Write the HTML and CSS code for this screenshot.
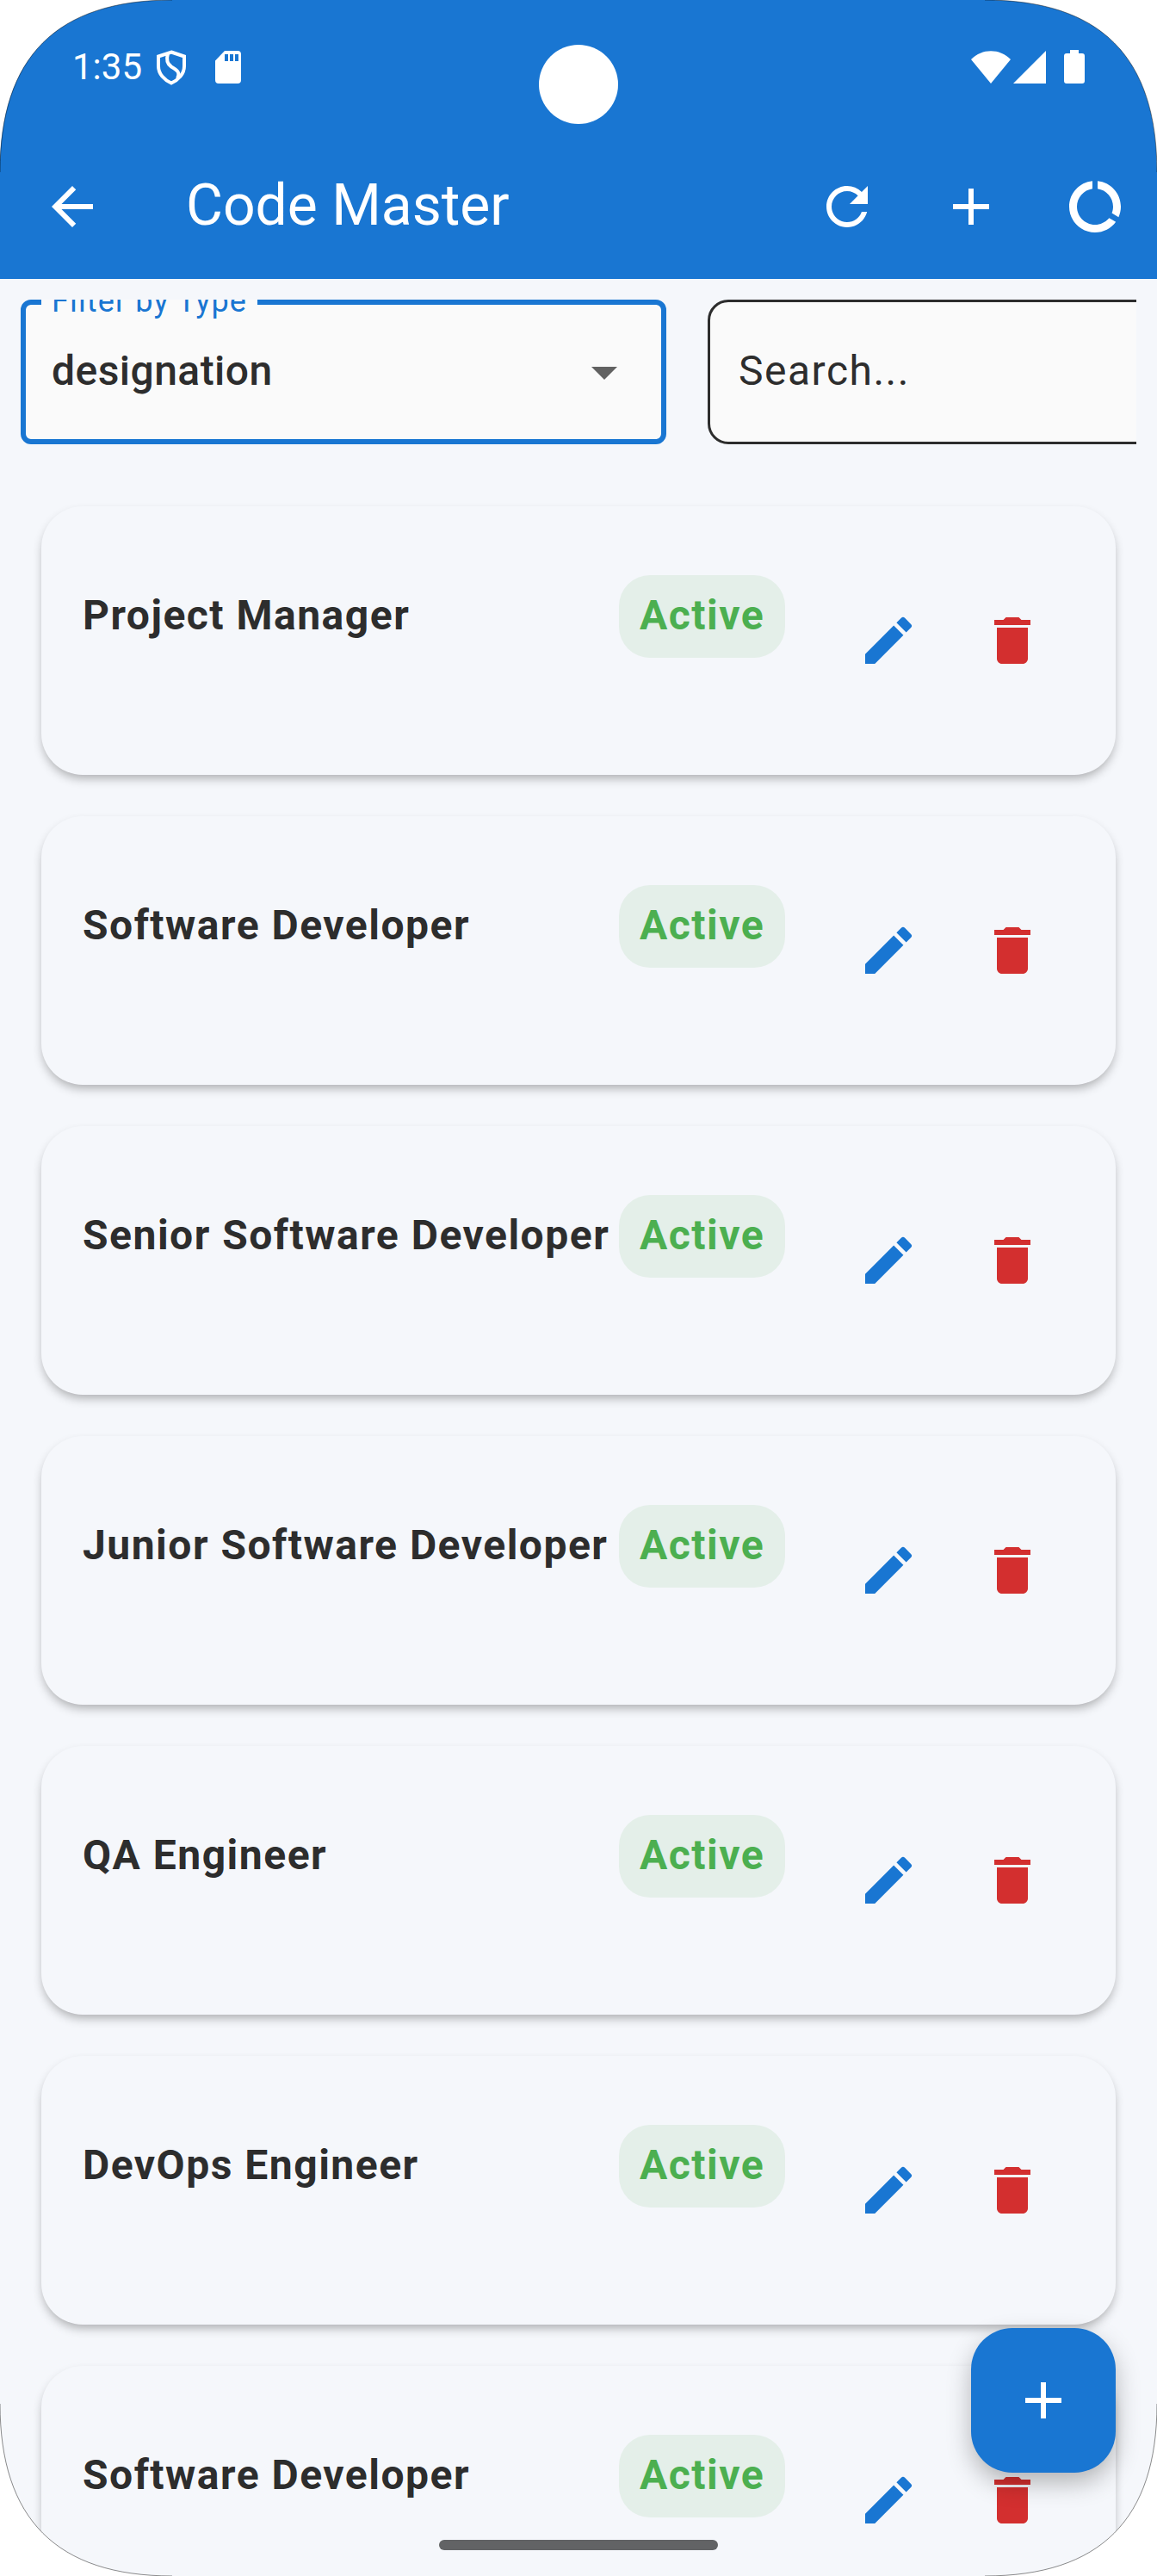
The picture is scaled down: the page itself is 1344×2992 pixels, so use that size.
FILE: index.html
```
<!DOCTYPE html>
<html lang="en">
<head>
<meta charset="utf-8">
<title>Code Master</title>
<link rel="stylesheet" href="styles.css">
</head>
<body>
<svg class="sprite" aria-hidden="true">
  <symbol id="edit" viewBox="0 0 24 24"><path d="M3 17.25V21h3.750L17.810 9.940l-3.750-3.750L3 17.250zM20.710 7.040a1 1 0 0 0 0-1.410l-2.340-2.340a1 1 0 0 0-1.410 0l-1.830 1.830 3.750 3.750 1.830-1.830z"/></symbol>
  <symbol id="trash" viewBox="0 0 24 24"><path d="M6 19c0 1.100.9 2 2 2h8c1.100 0 2-.9 2-2V7H6v12zM19 4h-3.500l-1-1h-5l-1 1H5v2h14V4z"/></symbol>
  <symbol id="plus" viewBox="0 0 24 24"><path d="M19 13h-6v6h-2v-6H5v-2h6V5h2v6h6v2z"/></symbol>
</svg>
<div class="screen">
  <header class="top">
    <div class="status">
      <div class="status-left">
        <span class="time">1:35</span>
        <svg class="shield" viewBox="0 0 34 42"><path d="M17 2.500L32 7.500V19C32 28 25 35 17 38.500C9 35 2 28 2 19V7.500ZM13 4.500C11 11 12 16 17 19.500C23 23 28 26 24 33" fill="none" stroke="#fff" stroke-width="4"/></svg>
        <svg class="sd" viewBox="0 0 30 38"><path d="M11 0H26a4 4 0 0 1 4 4V34a4 4 0 0 1-4 4H4a4 4 0 0 1-4-4V11.500ZM11 4v8h4V4zM17 4v8h4V4zM23 4v8h4V4z" fill="#fff" fill-rule="evenodd"/></svg>
      </div>
      <div class="status-right">
        <svg class="wifi" viewBox="0 0 46 38"><path d="M0 10C13-3 33-3 46 10L23 38Z" fill="#fff"/></svg>
        <svg class="signal" viewBox="0 0 38 38"><path d="M38 0V38H0Z" fill="#fff"/></svg>
        <svg class="battery" viewBox="0 0 24 39"><path d="M7 0h10v4h4a3 3 0 0 1 3 3v29a3 3 0 0 1-3 3H3a3 3 0 0 1-3-3V7a3 3 0 0 1 3-3h4z" fill="#fff"/></svg>
      </div>
      <div class="camera"></div>
    </div>
    <div class="appbar">
      <svg class="icon" viewBox="0 0 24 24"><path d="M20 11H7.830l5.590-5.590L12 4l-8 8 8 8 1.410-1.410L7.830 13H20v-2z"/></svg>
      <h1 class="title">Code Master</h1>
      <svg class="icon" viewBox="0 0 24 24"><path d="M17.650 6.350A7.958 7.958 0 0 0 12 4c-4.420 0-7.990 3.580-7.990 8s3.570 8 7.990 8c3.730 0 6.840-2.550 7.730-6h-2.080A5.990 5.990 0 0 1 12 18c-3.310 0-6-2.690-6-6s2.690-6 6-6c1.660 0 3.140.69 4.220 1.780L13 11h7V4l-2.350 2.350z"/></svg>
      <svg class="icon"><use href="#plus"/></svg>
      <svg class="icon" viewBox="0 0 24 24"><path d="M13 2.050v3.030c3.390.49 6 3.390 6 6.920 0 .9-.18 1.750-.48 2.540l2.600 1.530c.56-1.240.88-2.620.88-4.070 0-5.180-3.950-9.450-9-9.950zM12 19c-3.870 0-7-3.130-7-7 0-3.530 2.610-6.430 6-6.920V2.050c-5.060.5-9 4.760-9 9.950 0 5.520 4.470 10 9.990 10 3.310 0 6.240-1.610 8.060-4.090l-2.600-1.530C16.170 17.980 14.210 19 12 19z"/></svg>
    </div>
  </header>
  <section class="filters">
    <div class="select">
      <span class="label">Filter by Type</span>
      <span class="value">designation</span>
      <svg class="caret" viewBox="0 0 24 24"><path d="M7 10l5 5 5-5z"/></svg>
    </div>
    <div class="search">Search...</div>
  </section>
  <main class="list">
    <article class="card"><h2 class="name">Project Manager</h2><span class="chip">Active</span><svg class="icon edit"><use href="#edit"/></svg><svg class="icon trash"><use href="#trash"/></svg></article>
    <article class="card"><h2 class="name">Software Developer</h2><span class="chip">Active</span><svg class="icon edit"><use href="#edit"/></svg><svg class="icon trash"><use href="#trash"/></svg></article>
    <article class="card"><h2 class="name">Senior Software Developer</h2><span class="chip">Active</span><svg class="icon edit"><use href="#edit"/></svg><svg class="icon trash"><use href="#trash"/></svg></article>
    <article class="card"><h2 class="name">Junior Software Developer</h2><span class="chip">Active</span><svg class="icon edit"><use href="#edit"/></svg><svg class="icon trash"><use href="#trash"/></svg></article>
    <article class="card"><h2 class="name">QA Engineer</h2><span class="chip">Active</span><svg class="icon edit"><use href="#edit"/></svg><svg class="icon trash"><use href="#trash"/></svg></article>
    <article class="card"><h2 class="name">DevOps Engineer</h2><span class="chip">Active</span><svg class="icon edit"><use href="#edit"/></svg><svg class="icon trash"><use href="#trash"/></svg></article>
    <article class="card"><h2 class="name">Software Developer</h2><span class="chip">Active</span><svg class="icon edit"><use href="#edit"/></svg><svg class="icon trash"><use href="#trash"/></svg></article>
  </main>
  <div class="fab"><svg class="icon"><use href="#plus"/></svg></div>
  <div class="handle"></div>
  <!-- rounded display corners with a hairline edge -->
  <svg class="bezel" viewBox="0 0 1344 2992">
    <g fill="#fff">
      <path d="M0 0H200C66 0 0 66 0 200Z"/>
      <path d="M1344 0V200C1344 66 1278 0 1144 0Z"/>
      <path d="M0 2992V2792C0 2926 66 2992 200 2992Z"/>
      <path d="M1344 2992H1144C1278 2992 1344 2926 1344 2792Z"/>
    </g>
    <g fill="none" stroke="#000" stroke-width="1" stroke-opacity=".45">
      <path d="M200 0C66 0 0 66 0 200"/>
      <path d="M1344 200C1344 66 1278 0 1144 0"/>
      <path d="M0 2792C0 2926 66 2992 200 2992"/>
      <path d="M1144 2992C1278 2992 1344 2926 1344 2792"/>
    </g>
  </svg>
</div>
</body>
</html>
```
FILE: styles.css
```
* { box-sizing: border-box; }
body { margin: 0; background: #fff; font-family: Roboto, sans-serif; color: #2d2d2d; }
h1, h2 { margin: 0; }
svg { display: block; flex: none; }
.sprite { position: absolute; width: 0; height: 0; }
.screen {
  position: relative;
  width: 1344px;
  height: 2992px;
  overflow: hidden;
  background: #f5f7fb;
}
.icon { width: 72px; height: 72px; fill: currentColor; }

.top { height: 324px; background: #1976d2; color: #fff; }
.status {
  position: relative;
  display: flex;
  justify-content: space-between;
  height: 156px;
  padding: 58px 84px 0 84px;
}
.status-left, .status-right { display: flex; align-items: flex-start; height: 40px; }
.time { width: 98px; font-size: 42px; line-height: 39px; white-space: nowrap; }
.shield { width: 34px; height: 42px; }
.sd { width: 30px; height: 38px; margin: 1px 0 0 34px; }
.wifi { width: 46px; height: 38px; margin-top: 1px; }
.signal { width: 38px; height: 38px; margin: 1px 0 0 3px; }
.battery { width: 24px; height: 39px; margin-left: 21px; }
.camera {
  position: absolute;
  left: 626px;
  top: 52px;
  width: 92px;
  height: 92px;
  border-radius: 50%;
  background: #fff;
}
.appbar { display: flex; align-items: center; height: 168px; padding: 0 36px 0 48px; gap: 72px; }
.title { flex: 1; margin: 0 0 3px 24px; font-size: 66px; font-weight: 400; line-height: 81px; white-space: nowrap; }

.filters {
  display: flex;
  gap: 48px;
  margin: 24px 24px 0;
  height: 168px;
  overflow: hidden;
}
.select {
  position: relative;
  display: flex;
  align-items: center;
  justify-content: space-between;
  flex: none;
  width: 750px;
  padding: 0 30px;
  border: 6px solid #1976d2;
  border-radius: 12px;
  background: #fafafa;
}
.label {
  position: absolute;
  left: 18px;
  top: -28px;
  width: 251px;
  padding-left: 12px;
  background: #fafafa;
  color: #1976d2;
  font-size: 36px;
  line-height: 48px;
  letter-spacing: 1.13px;
  white-space: nowrap;
}
.value { margin-bottom: 3px; font-size: 48px; font-weight: 500; line-height: 73px; letter-spacing: 0.45px; }
.caret { width: 72px; height: 72px; fill: #616161; }
.search {
  flex: none;
  width: 750px;
  padding: 0 33px;
  border: 3px solid #2d2d2d;
  border-radius: 24px;
  background: #fafafa;
  font-size: 48px;
  line-height: 159px;
  letter-spacing: 1.5px;
}

.list { display: flex; flex-direction: column; gap: 48px; padding: 72px 48px 0; }
.card {
  display: flex;
  align-items: center;
  flex: none;
  height: 312px;
  padding: 0 84px 0 48px;
  border-radius: 48px;
  background: #f5f7fb;
  box-shadow: 0 6px 12px -2px rgba(0,0,0,.3);
}
.name { flex: none; width: 623px; margin-bottom: 59px; font-size: 48px; font-weight: 700; line-height: 73px; letter-spacing: 1.5px; white-space: nowrap; }
.chip {
  width: 193px;
  height: 96px;
  margin-bottom: 56px;
  padding-left: 24px;
  border-radius: 36px;
  background: #e4efe9;
  color: #4caf50;
  font-size: 48px;
  font-weight: 700;
  line-height: 93px;
  letter-spacing: 1.5px;
}
.edit { margin-left: 84px; color: #1976d2; }
.trash { margin-left: 72px; color: #d32f2f; }

.fab {
  position: absolute;
  left: 1128px;
  top: 2704px;
  display: flex;
  align-items: center;
  justify-content: center;
  width: 168px;
  height: 168px;
  border-radius: 48px;
  background: #1976d2;
  color: #fff;
  box-shadow: 0 12px 30px -2px rgba(0,0,0,.3);
}
.handle {
  position: absolute;
  left: 510px;
  top: 2950px;
  width: 324px;
  height: 12px;
  border-radius: 6px;
  background: #626365;
}
.bezel { position: absolute; left: 0; top: 0; width: 1344px; height: 2992px; }
```
